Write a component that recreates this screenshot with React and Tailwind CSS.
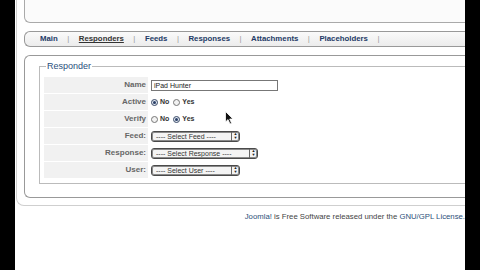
import React from 'react';

const tabs = ['Main', 'Responders', 'Feeds', 'Responses', 'Attachments', 'Placeholders'];

const Radio = ({ checked }) => (
  <span
    className={`inline-flex items-center justify-center w-[7px] h-[7px] rounded-full border ${
      checked ? 'border-[#3a4a66] bg-[#dfe6f0]' : 'border-[#777] bg-[#f2f2f2]'
    }`}
  >
    {checked && <span className="w-[3px] h-[3px] rounded-full bg-[#2a3f66]" />}
  </span>
);

const Select = ({ label, width }) => (
  <div
    className={`flex items-center h-[11px] rounded-[3px] border border-[#4a4a4a] bg-[#f4f4f4] shadow-[inset_0_0_0_1px_#8a8a8a] ${width}`}
  >
    <span className="flex-1 pl-[4px] text-[7px] leading-none text-[#333] whitespace-nowrap overflow-hidden">{label}</span>
    <span className="w-[8px] h-full border-l border-[#666] flex flex-col items-center justify-center text-[4px] leading-[4px] text-[#222]">
      <span>▲</span>
      <span>▼</span>
    </span>
  </div>
);

const Row = ({ label, children }) => (
  <div className="flex h-[16px] items-center">
    <div className="w-[104px] h-full bg-[#f1f1f1] flex items-center justify-end pr-[2px] text-[8px] font-bold text-[#666]">
      {label}
    </div>
    <div className="pl-[3px] flex items-center gap-[2px]">{children}</div>
  </div>
);

export default function App() {
  return (
    <div className="w-[480px] h-[270px] bg-black flex overflow-hidden" style={{ fontFamily: '"Liberation Sans", Arial, sans-serif' }}>
      <div className="ml-[15px] w-[450px] h-full bg-white relative overflow-hidden pl-px">
        <div className="w-[520px] h-[206px] border-l border-b border-[#cfcfcf] rounded-bl-[8px] pl-[7px]">
          {/* top panel */}
          <div className="h-[23px] border-l border-b border-[#aaa] rounded-bl-[6px] bg-[#fbfbfb]" />

          {/* tabs */}
          <div className="mt-[8px] h-[16px] border border-r-0 border-[#999] rounded-l-[6px] bg-gradient-to-b from-[#fafafa] to-[#ececec] flex items-center pl-[10px] text-[7.8px] font-bold text-[#233a66]">
            {tabs.map((t) => (
              <React.Fragment key={t}>
                <span className={t === 'Responders' ? 'underline text-[#333] mx-[5px]' : 'mx-[5px]'}>{t}</span>
                <span className="font-normal text-[#999] mx-[4.5px]">|</span>
              </React.Fragment>
            ))}
          </div>

          {/* content panel */}
          <div className="mt-[8px] h-[143px] border border-r-0 border-[#999] rounded-l-[6px] pl-[14px] pt-[5px]">
            <fieldset className="h-[123px] border border-r-0 border-[#bbb] pl-[4px] pt-[5px]">
              <legend className="ml-[2px] px-[1px] text-[9px] leading-[11px] text-[#2a4f7c]">Responder</legend>
              <div className="flex flex-col gap-px">
                <Row label="Name">
                  <div className="w-[127px] h-[11px] border border-[#777] bg-white text-[7px] leading-[9px] pl-[2px] text-[#222]">
                    iPad Hunter
                  </div>
                </Row>
                <Row label="Active">
                  <Radio checked />
                  <span className="text-[7px] font-bold text-[#333] mr-[2px]">No</span>
                  <Radio />
                  <span className="text-[7px] font-bold text-[#333]">Yes</span>
                </Row>
                <Row label="Verify">
                  <Radio />
                  <span className="text-[7px] font-bold text-[#333] mr-[2px]">No</span>
                  <Radio checked />
                  <span className="text-[7px] font-bold text-[#333]">Yes</span>
                </Row>
                <Row label="Feed:">
                  <Select label="---- Select Feed ----" width="w-[89px]" />
                </Row>
                <Row label="Response:">
                  <Select label="---- Select Response ----" width="w-[107px]" />
                </Row>
                <Row label="User:">
                  <Select label="---- Select User ----" width="w-[89px]" />
                </Row>
              </div>
            </fieldset>
          </div>
        </div>

        {/* footer */}
        <div className="w-[449px] mt-[5px] text-right text-[7.75px] text-[#444]">
          <span className="text-[#2c4f7a]">Joomla!</span> is Free Software released under the{' '}
          <span className="text-[#2c4f7a]">GNU/GPL License.</span>
        </div>

        {/* mouse cursor */}
        <svg className="absolute left-[210px] top-[111px]" width="9" height="14" viewBox="0 0 9 14">
          <path d="M0.5 0.5 L0.5 11 L3 8.6 L5 13 L6.6 12.3 L4.7 8 L8 8 Z" fill="#111" stroke="#fff" strokeWidth="0.8" />
        </svg>
      </div>
    </div>
  );
}
